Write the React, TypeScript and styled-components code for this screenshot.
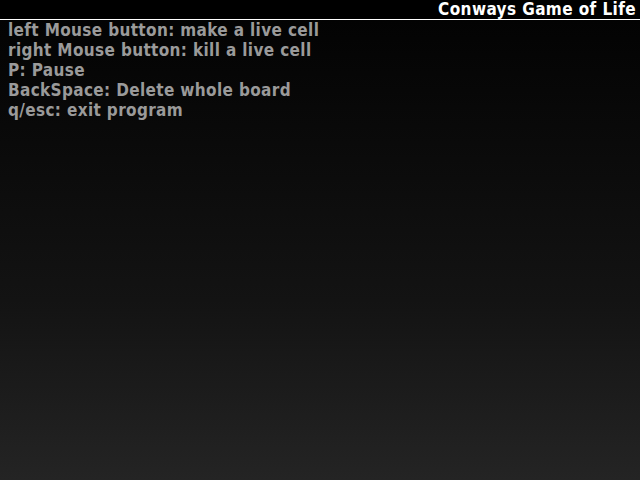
import React from "react";
import styled, { createGlobalStyle } from "styled-components";

const Global = createGlobalStyle`
  html, body { margin: 0; padding: 0; width: 640px; height: 480px; overflow: hidden; }
  body { background: #000; }
`;

const Screen = styled.div`
  width: 640px;
  height: 480px;
  display: flex;
  flex-direction: column;
  background: linear-gradient(to bottom, #000 0px, #030303 20px, #131313 300px, #242424 480px);
  font-family: "DejaVu Sans Condensed", "DejaVu Sans", sans-serif;
  font-weight: bold;
`;

const TitleBar = styled.div`
  height: 19px;
  display: flex;
  justify-content: flex-end;
  align-items: center;
  padding-right: 4px;
  background: #000;
  border-bottom: 1px solid #fff;
`;

const Title = styled.span`
  color: #fff;
  font-size: 17px;
  line-height: 19px;
  letter-spacing: 0.4px;
`;

const Help = styled.div`
  display: flex;
  flex-direction: column;
  padding: 0 8px;
`;

const Line = styled.div`
  color: #9a9a9a;
  font-size: 17px;
  line-height: 20px;
  height: 20px;
  letter-spacing: 0.35px;
`;

const lines = [
  "left Mouse button: make a live cell",
  "right Mouse button: kill a live cell",
  "P: Pause",
  "BackSpace: Delete whole board",
  "q/esc: exit program",
];

export default function App() {
  return (
    <>
      <Global />
      <Screen>
        <TitleBar>
          <Title>Conways Game of Life</Title>
        </TitleBar>
        <Help>
          {lines.map((l) => (
            <Line key={l}>{l}</Line>
          ))}
        </Help>
      </Screen>
    </>
  );
}
